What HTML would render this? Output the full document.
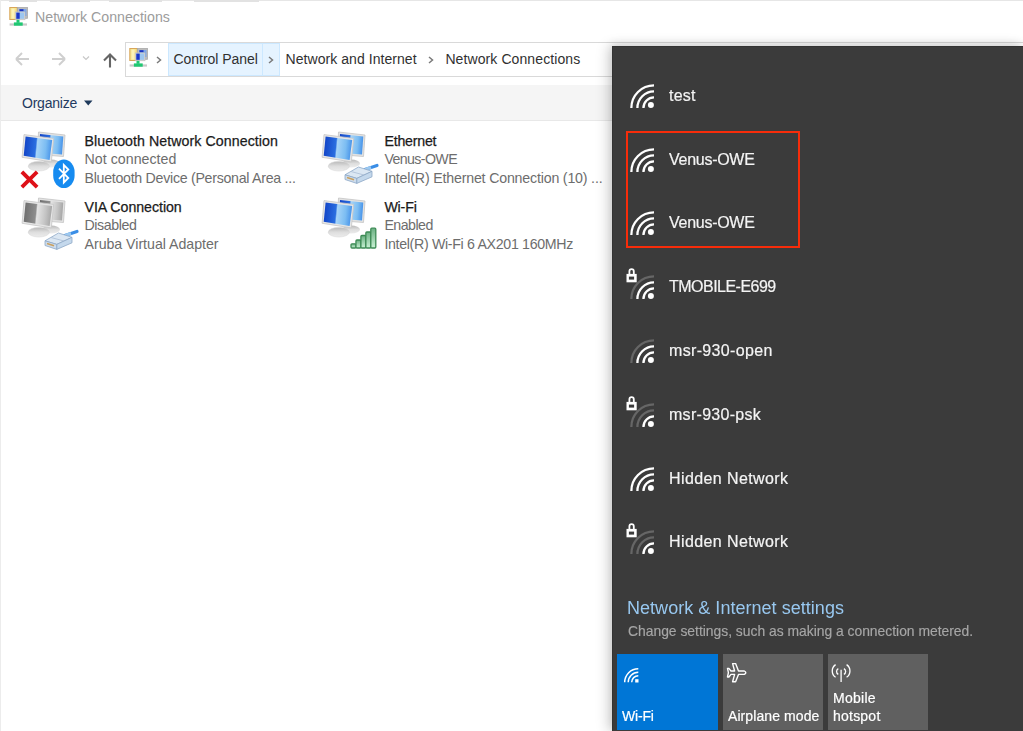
<!DOCTYPE html>
<html><head><meta charset="utf-8"><style>
html,body{margin:0;padding:0;}
body{width:1023px;height:731px;overflow:hidden;position:relative;background:#fff;font-family:"Liberation Sans",sans-serif;}
.t{position:absolute;white-space:nowrap;line-height:1;}
svg{overflow:visible}
</style></head><body>
<div style="position:absolute;left:0;top:0;width:1023px;height:1px;background:#e6e6e6"></div>
<div style="position:absolute;left:9px;top:0;width:28px;height:2px;background:#e2e2e2"></div>
<div style="position:absolute;left:50px;top:0;width:40px;height:2px;background:#e2e2e2"></div>
<div style="position:absolute;left:109px;top:0;width:53px;height:2px;background:#e2e2e2"></div>
<div style="position:absolute;left:194px;top:0;width:65px;height:2px;background:#e2e2e2"></div>
<div style="position:absolute;left:0;top:0;width:1px;height:731px;background:#ececec"></div>
<svg style="position:absolute;left:9px;top:7px" width="20" height="20" viewBox="0 0 20 20">
<rect x="0.8" y="0.5" width="7.4" height="12" fill="#f6e48c" stroke="#d8a55a" stroke-width="1"/>
<rect x="2.5" y="1.5" width="3" height="10" fill="#fbf2b8"/>
<rect x="8.5" y="0.5" width="10" height="10.8" fill="#bcbcbc" stroke="#a9a9a9" stroke-width="0.8"/>
<rect x="10" y="2" width="7.5" height="7" fill="#7ea6e6"/>
<rect x="10.5" y="2.2" width="4" height="2" fill="#1a32c0"/>
<rect x="6.2" y="4.9" width="9.8" height="7.9" fill="#d6d6d6" stroke="#bdbdbd" stroke-width="0.6"/>
<rect x="7.3" y="5.6" width="7.8" height="6.2" fill="#9cc6f0"/>
<rect x="7.3" y="5.6" width="3.4" height="6.2" fill="#1a36c8"/>
<rect x="0.6" y="16.4" width="17.4" height="2.2" fill="#c9c9c9"/>
<rect x="7.5" y="12.8" width="3" height="3" fill="#1fc872"/>
<rect x="4.9" y="15.4" width="8.8" height="3.3" fill="#1fc872"/>
</svg>
<div class="t" style="left:35.00px;top:10.28px;font-size:14.2px;color:#9c9c9c;letter-spacing:0.002px;">Network Connections</div>
<svg style="position:absolute;left:12px;top:48px" width="112" height="24" viewBox="0 0 112 24">
<g fill="none" stroke="#cfcfcf" stroke-width="1.9">
<path d="M4 11 H17 M4 11 L10 5 M4 11 L10 17"/>
<path d="M40 11 H53 M53 11 L47 5 M53 11 L47 17"/>
<path d="M71 8.5 L74 11.5 L77 8.5" stroke="#c8c8c8" stroke-width="1.2"/>
</g>
<g fill="none" stroke="#666666" stroke-width="2.1">
<path d="M98 19.5 V6.5 M92 12.5 L98 6.5 L104 12.5"/>
</g>
</svg>
<div style="position:absolute;left:125px;top:42px;width:960px;height:33px;border:1px solid #d9d9d9;background:#fff"></div>
<svg style="position:absolute;left:129px;top:48px" width="20" height="20" viewBox="0 0 20 20">
<rect x="0.8" y="0.5" width="7.4" height="12" fill="#f6e48c" stroke="#d8a55a" stroke-width="1"/>
<rect x="2.5" y="1.5" width="3" height="10" fill="#fbf2b8"/>
<rect x="8.5" y="0.5" width="10" height="10.8" fill="#bcbcbc" stroke="#a9a9a9" stroke-width="0.8"/>
<rect x="10" y="2" width="7.5" height="7" fill="#7ea6e6"/>
<rect x="10.5" y="2.2" width="4" height="2" fill="#1a32c0"/>
<rect x="6.2" y="4.9" width="9.8" height="7.9" fill="#d6d6d6" stroke="#bdbdbd" stroke-width="0.6"/>
<rect x="7.3" y="5.6" width="7.8" height="6.2" fill="#9cc6f0"/>
<rect x="7.3" y="5.6" width="3.4" height="6.2" fill="#1a36c8"/>
<rect x="0.6" y="16.4" width="17.4" height="2.2" fill="#c9c9c9"/>
<rect x="7.5" y="12.8" width="3" height="3" fill="#1fc872"/>
<rect x="4.9" y="15.4" width="8.8" height="3.3" fill="#1fc872"/>
</svg>
<div style="position:absolute;left:168px;top:43px;width:112px;height:33px;background:#e5f3ff;border:1px solid #cce8ff;box-sizing:border-box"></div>
<div style="position:absolute;left:262px;top:43px;width:1px;height:33px;background:#cce8ff"></div>
<svg style="position:absolute;left:155px;top:56px" width="8" height="8" viewBox="0 0 8 8"><path d="M2 1 L5.5 4 L2 7" fill="none" stroke="#7a7a7a" stroke-width="1.5"/></svg>
<div class="t" style="left:173.50px;top:52.05px;font-size:14px;color:#303030;letter-spacing:-0.041px;">Control Panel</div>
<svg style="position:absolute;left:267px;top:56px" width="8" height="8" viewBox="0 0 8 8"><path d="M2 1 L5.5 4 L2 7" fill="none" stroke="#7a7a7a" stroke-width="1.5"/></svg>
<div class="t" style="left:285.60px;top:52.05px;font-size:14px;color:#303030;letter-spacing:0.052px;">Network and Internet</div>
<svg style="position:absolute;left:427px;top:56px" width="8" height="8" viewBox="0 0 8 8"><path d="M2 1 L5.5 4 L2 7" fill="none" stroke="#7a7a7a" stroke-width="1.5"/></svg>
<div class="t" style="left:445.40px;top:52.05px;font-size:14px;color:#303030;letter-spacing:0.097px;">Network Connections</div>
<div style="position:absolute;left:1px;top:85px;width:1022px;height:35px;background:#f5f5f5;border-bottom:1px solid #e8e8e8"></div>
<div class="t" style="left:22.00px;top:95.95px;font-size:14px;color:#1f3a60;letter-spacing:-0.226px;">Organize</div>
<svg style="position:absolute;left:83px;top:99px" width="11" height="8" viewBox="0 0 11 8"><path d="M1 1.5 H9.5 L5.25 6.5Z" fill="#1e395b"/></svg>
<svg style="position:absolute;left:14px;top:126px" width="66" height="66" viewBox="0 0 66 66">
<defs><linearGradient id="m14_126" x1="0" y1="0" x2="1" y2="0.08"><stop offset="0" stop-color="#0f3fc4"/><stop offset="0.45" stop-color="#2a6ee0"/><stop offset="0.5" stop-color="#a6d4f8"/><stop offset="0.8" stop-color="#7cbdf2"/><stop offset="1" stop-color="#4b96ea"/></linearGradient>
<linearGradient id="sm14_126" x1="0" y1="0" x2="0" y2="1"><stop offset="0" stop-color="#b9b9b9"/><stop offset="0.5" stop-color="#dedede"/><stop offset="1" stop-color="#ececec"/></linearGradient></defs>
<polygon points="24.5,6 51,9 49.5,30.5 23.5,28.5" fill="#e2e2e2" stroke="#c4c4c4" stroke-width="0.8"/>
<polygon points="26,8 49.3,10.5 48,28.5 25,26.8" fill="url(#m14_126)"/>
<ellipse cx="37" cy="37.5" rx="9" ry="4" fill="url(#sm14_126)"/>
<polygon points="10,8.6 39.7,12.4 37.3,35.9 8.1,31.3" fill="#e6e6e6" stroke="#c6c6c6" stroke-width="0.8"/>
<polygon points="11.6,10.4 38.2,13.9 35.6,33.9 9.7,29.8" fill="url(#m14_126)"/>
<ellipse cx="24.8" cy="40.2" rx="10.6" ry="4.8" fill="url(#sm14_126)" stroke="#d2d2d2" stroke-width="0.5"/>
</svg>
<svg style="position:absolute;left:21px;top:171px" width="18" height="18" viewBox="0 0 18 18">
<path d="M2.2 2.2 L14.8 14.8 M14.8 2.2 L2.2 14.8" stroke="#de1018" stroke-width="3.8" stroke-linecap="square"/></svg>
<svg style="position:absolute;left:52px;top:159px" width="23" height="30" viewBox="0 0 23 30">
<rect x="1.2" y="0.5" width="21.4" height="28.6" rx="10.7" ry="12.5" fill="#168bf0"/>
<path d="M7 9.7 L16.3 19 L11.8 23.5 V6 L16.3 10.5 L7 19.8" fill="none" stroke="#fff" stroke-width="1.8"/></svg>
<div class="t" style="left:84.50px;top:133.98px;font-size:14.2px;color:#1b1b1b;letter-spacing:0.064px;-webkit-text-stroke:0.25px currentColor;">Bluetooth Network Connection</div>
<div class="t" style="left:84.50px;top:152.28px;font-size:14.2px;color:#6d6d6d;letter-spacing:0.033px;">Not connected</div>
<div class="t" style="left:84.50px;top:170.88px;font-size:14.2px;color:#6d6d6d;letter-spacing:-0.278px;">Bluetooth Device (Personal Area ...</div>
<svg style="position:absolute;left:314px;top:126px" width="66" height="66" viewBox="0 0 66 66">
<defs><linearGradient id="m314_126" x1="0" y1="0" x2="1" y2="0.08"><stop offset="0" stop-color="#0f3fc4"/><stop offset="0.45" stop-color="#2a6ee0"/><stop offset="0.5" stop-color="#a6d4f8"/><stop offset="0.8" stop-color="#7cbdf2"/><stop offset="1" stop-color="#4b96ea"/></linearGradient>
<linearGradient id="sm314_126" x1="0" y1="0" x2="0" y2="1"><stop offset="0" stop-color="#b9b9b9"/><stop offset="0.5" stop-color="#dedede"/><stop offset="1" stop-color="#ececec"/></linearGradient></defs>
<polygon points="24.5,6 51,9 49.5,30.5 23.5,28.5" fill="#e2e2e2" stroke="#c4c4c4" stroke-width="0.8"/>
<polygon points="26,8 49.3,10.5 48,28.5 25,26.8" fill="url(#m314_126)"/>
<ellipse cx="37" cy="37.5" rx="9" ry="4" fill="url(#sm314_126)"/>
<polygon points="10,8.6 39.7,12.4 37.3,35.9 8.1,31.3" fill="#e6e6e6" stroke="#c6c6c6" stroke-width="0.8"/>
<polygon points="11.6,10.4 38.2,13.9 35.6,33.9 9.7,29.8" fill="url(#m314_126)"/>
<ellipse cx="24.8" cy="40.2" rx="10.6" ry="4.8" fill="url(#sm314_126)" stroke="#d2d2d2" stroke-width="0.5"/>
</svg>
<svg style="position:absolute;left:344px;top:163px" width="34" height="24" viewBox="0 0 34 24">
<path d="M21 6.5 L33 2.5" stroke="#3a8ee6" stroke-width="3.2" stroke-linecap="round"/>
<path d="M21 6.5 L27 4.5" stroke="#9cc8f0" stroke-width="3"/>
<polygon points="1,11.8 14.5,4 28,8.3 12.8,15.4" fill="#dbe7f3" stroke="#8ea8c6" stroke-width="0.8"/>
<polygon points="1,11.8 12.8,15.4 12.8,20.4 1,16.5" fill="#cddcec" stroke="#8ea8c6" stroke-width="0.8"/>
<polygon points="12.8,15.4 28,8.3 28,13.8 12.8,20.4" fill="#c4d8ec" stroke="#8ea8c6" stroke-width="0.8"/>
<path d="M3 14.5 L10 16.8" stroke="#c9a060" stroke-width="1.6"/>
<path d="M7 8.5 L20 12" stroke="#a9bdd4" stroke-width="0.8"/>
</svg>
<div class="t" style="left:384.40px;top:133.98px;font-size:14.2px;color:#1b1b1b;letter-spacing:-0.210px;-webkit-text-stroke:0.25px currentColor;">Ethernet</div>
<div class="t" style="left:384.40px;top:152.28px;font-size:14.2px;color:#6d6d6d;letter-spacing:-0.603px;">Venus-OWE</div>
<div class="t" style="left:384.40px;top:170.88px;font-size:14.2px;color:#6d6d6d;letter-spacing:-0.182px;">Intel(R) Ethernet Connection (10) ...</div>
<svg style="position:absolute;left:14px;top:192px" width="66" height="66" viewBox="0 0 66 66">
<defs><linearGradient id="m14_192" x1="0" y1="0" x2="1" y2="0.08"><stop offset="0" stop-color="#6a6a6a"/><stop offset="0.45" stop-color="#8e8e8e"/><stop offset="0.5" stop-color="#e4e4e4"/><stop offset="0.8" stop-color="#c4c4c4"/><stop offset="1" stop-color="#a8a8a8"/></linearGradient>
<linearGradient id="sm14_192" x1="0" y1="0" x2="0" y2="1"><stop offset="0" stop-color="#b9b9b9"/><stop offset="0.5" stop-color="#dedede"/><stop offset="1" stop-color="#ececec"/></linearGradient></defs>
<polygon points="24.5,6 51,9 49.5,30.5 23.5,28.5" fill="#e2e2e2" stroke="#c4c4c4" stroke-width="0.8"/>
<polygon points="26,8 49.3,10.5 48,28.5 25,26.8" fill="url(#m14_192)"/>
<ellipse cx="37" cy="37.5" rx="9" ry="4" fill="url(#sm14_192)"/>
<polygon points="10,8.6 39.7,12.4 37.3,35.9 8.1,31.3" fill="#e6e6e6" stroke="#c6c6c6" stroke-width="0.8"/>
<polygon points="11.6,10.4 38.2,13.9 35.6,33.9 9.7,29.8" fill="url(#m14_192)"/>
<ellipse cx="24.8" cy="40.2" rx="10.6" ry="4.8" fill="url(#sm14_192)" stroke="#d2d2d2" stroke-width="0.5"/>
</svg>
<svg style="position:absolute;left:44px;top:229px" width="34" height="24" viewBox="0 0 34 24">
<path d="M21 6.5 L33 2.5" stroke="#3a8ee6" stroke-width="3.2" stroke-linecap="round"/>
<path d="M21 6.5 L27 4.5" stroke="#9cc8f0" stroke-width="3"/>
<polygon points="1,11.8 14.5,4 28,8.3 12.8,15.4" fill="#dbe7f3" stroke="#8ea8c6" stroke-width="0.8"/>
<polygon points="1,11.8 12.8,15.4 12.8,20.4 1,16.5" fill="#cddcec" stroke="#8ea8c6" stroke-width="0.8"/>
<polygon points="12.8,15.4 28,8.3 28,13.8 12.8,20.4" fill="#c4d8ec" stroke="#8ea8c6" stroke-width="0.8"/>
<path d="M3 14.5 L10 16.8" stroke="#c9a060" stroke-width="1.6"/>
<path d="M7 8.5 L20 12" stroke="#a9bdd4" stroke-width="0.8"/>
</svg>
<div class="t" style="left:84.50px;top:199.98px;font-size:14.2px;color:#1b1b1b;letter-spacing:-0.042px;-webkit-text-stroke:0.25px currentColor;">VIA Connection</div>
<div class="t" style="left:84.50px;top:218.18px;font-size:14.2px;color:#6d6d6d;letter-spacing:-0.419px;">Disabled</div>
<div class="t" style="left:84.50px;top:236.58px;font-size:14.2px;color:#6d6d6d;letter-spacing:-0.030px;">Aruba Virtual Adapter</div>
<svg style="position:absolute;left:314px;top:192px" width="66" height="66" viewBox="0 0 66 66">
<defs><linearGradient id="m314_192" x1="0" y1="0" x2="1" y2="0.08"><stop offset="0" stop-color="#0f3fc4"/><stop offset="0.45" stop-color="#2a6ee0"/><stop offset="0.5" stop-color="#a6d4f8"/><stop offset="0.8" stop-color="#7cbdf2"/><stop offset="1" stop-color="#4b96ea"/></linearGradient>
<linearGradient id="sm314_192" x1="0" y1="0" x2="0" y2="1"><stop offset="0" stop-color="#b9b9b9"/><stop offset="0.5" stop-color="#dedede"/><stop offset="1" stop-color="#ececec"/></linearGradient></defs>
<polygon points="24.5,6 51,9 49.5,30.5 23.5,28.5" fill="#e2e2e2" stroke="#c4c4c4" stroke-width="0.8"/>
<polygon points="26,8 49.3,10.5 48,28.5 25,26.8" fill="url(#m314_192)"/>
<ellipse cx="37" cy="37.5" rx="9" ry="4" fill="url(#sm314_192)"/>
<polygon points="10,8.6 39.7,12.4 37.3,35.9 8.1,31.3" fill="#e6e6e6" stroke="#c6c6c6" stroke-width="0.8"/>
<polygon points="11.6,10.4 38.2,13.9 35.6,33.9 9.7,29.8" fill="url(#m314_192)"/>
<ellipse cx="24.8" cy="40.2" rx="10.6" ry="4.8" fill="url(#sm314_192)" stroke="#d2d2d2" stroke-width="0.5"/>
</svg>
<svg style="position:absolute;left:350px;top:227px" width="28" height="24" viewBox="0 0 28 24"><defs><linearGradient id="bg" x1="0" y1="0" x2="0" y2="1"><stop offset="0" stop-color="#6cb083"/><stop offset="1" stop-color="#c9f2d5"/></linearGradient></defs><rect x="1.0" y="16.8" width="5" height="4.199999999999999" fill="url(#bg)" stroke="#3d8b55" stroke-width="1.3" rx="1"/><rect x="5.95" y="13" width="5" height="8" fill="url(#bg)" stroke="#3d8b55" stroke-width="1.3" rx="1"/><rect x="10.9" y="8.5" width="5" height="12.5" fill="url(#bg)" stroke="#3d8b55" stroke-width="1.3" rx="1"/><rect x="15.850000000000001" y="5" width="5" height="16" fill="url(#bg)" stroke="#3d8b55" stroke-width="1.3" rx="1"/><rect x="20.8" y="1.2" width="5" height="19.8" fill="url(#bg)" stroke="#3d8b55" stroke-width="1.3" rx="1"/></svg>
<div class="t" style="left:384.40px;top:199.98px;font-size:14.2px;color:#1b1b1b;letter-spacing:-0.163px;-webkit-text-stroke:0.25px currentColor;">Wi-Fi</div>
<div class="t" style="left:384.40px;top:218.18px;font-size:14.2px;color:#6d6d6d;letter-spacing:-0.531px;">Enabled</div>
<div class="t" style="left:384.40px;top:236.58px;font-size:14.2px;color:#6d6d6d;letter-spacing:-0.320px;">Intel(R) Wi-Fi 6 AX201 160MHz</div>
<div style="position:absolute;left:612px;top:46px;width:411px;height:685px;background:#3b3b3b;box-shadow:-4px 0 12px rgba(0,0,0,0.18), 0 -3px 8px rgba(0,0,0,0.08);border-left:1px solid #333;border-top:1px solid #333;box-sizing:border-box"></div>
<svg style="position:absolute;left:623.90px;top:75.80px" width="34" height="36" viewBox="0 0 34 36"><path d="M7.350000000000001 32 A22.65 22.65 0 0 1 30 9.350000000000001" fill="none" stroke="#ffffff" stroke-width="2.3"/><path d="M13.399999999999999 32 A16.6 16.6 0 0 1 30 15.399999999999999" fill="none" stroke="#ffffff" stroke-width="2.3"/><path d="M19.45 32 A10.55 10.55 0 0 1 30 21.45" fill="none" stroke="#ffffff" stroke-width="2.3"/><circle cx="26.9" cy="29" r="3" fill="#fff"/></svg>
<div class="t" style="left:669.00px;top:87.86px;font-size:16px;color:#f4f4f4;letter-spacing:0.203px;-webkit-text-stroke:0.2px currentColor;will-change:transform;">test</div>
<svg style="position:absolute;left:623.90px;top:139.60px" width="34" height="36" viewBox="0 0 34 36"><path d="M7.350000000000001 32 A22.65 22.65 0 0 1 30 9.350000000000001" fill="none" stroke="#ffffff" stroke-width="2.3"/><path d="M13.399999999999999 32 A16.6 16.6 0 0 1 30 15.399999999999999" fill="none" stroke="#ffffff" stroke-width="2.3"/><path d="M19.45 32 A10.55 10.55 0 0 1 30 21.45" fill="none" stroke="#ffffff" stroke-width="2.3"/><circle cx="26.9" cy="29" r="3" fill="#fff"/></svg>
<div class="t" style="left:669.00px;top:151.66px;font-size:16px;color:#f4f4f4;letter-spacing:-0.270px;-webkit-text-stroke:0.2px currentColor;will-change:transform;">Venus-OWE</div>
<svg style="position:absolute;left:623.90px;top:203.40px" width="34" height="36" viewBox="0 0 34 36"><path d="M7.350000000000001 32 A22.65 22.65 0 0 1 30 9.350000000000001" fill="none" stroke="#ffffff" stroke-width="2.3"/><path d="M13.399999999999999 32 A16.6 16.6 0 0 1 30 15.399999999999999" fill="none" stroke="#ffffff" stroke-width="2.3"/><path d="M19.45 32 A10.55 10.55 0 0 1 30 21.45" fill="none" stroke="#ffffff" stroke-width="2.3"/><circle cx="26.9" cy="29" r="3" fill="#fff"/></svg>
<div class="t" style="left:669.00px;top:215.46px;font-size:16px;color:#f4f4f4;letter-spacing:-0.270px;-webkit-text-stroke:0.2px currentColor;will-change:transform;">Venus-OWE</div>
<svg style="position:absolute;left:623.90px;top:267.20px" width="34" height="36" viewBox="0 0 34 36"><path d="M7.350000000000001 32 A22.65 22.65 0 0 1 30 9.350000000000001" fill="none" stroke="#666666" stroke-width="2.3"/><path d="M13.399999999999999 32 A16.6 16.6 0 0 1 30 15.399999999999999" fill="none" stroke="#ffffff" stroke-width="2.3"/><path d="M19.45 32 A10.55 10.55 0 0 1 30 21.45" fill="none" stroke="#ffffff" stroke-width="2.3"/><circle cx="26.9" cy="29" r="3" fill="#fff"/><path d="M5.4 7.399999999999999 V4.399999999999999 A2.2 2.2 0 0 1 9.8 4.399999999999999 V7.399999999999999" fill="none" stroke="#fff" stroke-width="1.8"/><rect x="2.5" y="6.899999999999999" width="10.2" height="8.4" fill="#fff"/><rect x="4.9" y="9.599999999999998" width="5.2" height="3" fill="#3b3b3b"/></svg>
<div class="t" style="left:669.00px;top:279.26px;font-size:16px;color:#f4f4f4;letter-spacing:-0.519px;-webkit-text-stroke:0.2px currentColor;will-change:transform;">TMOBILE-E699</div>
<svg style="position:absolute;left:623.90px;top:331.00px" width="34" height="36" viewBox="0 0 34 36"><path d="M7.350000000000001 32 A22.65 22.65 0 0 1 30 9.350000000000001" fill="none" stroke="#666666" stroke-width="2.3"/><path d="M13.399999999999999 32 A16.6 16.6 0 0 1 30 15.399999999999999" fill="none" stroke="#ffffff" stroke-width="2.3"/><path d="M19.45 32 A10.55 10.55 0 0 1 30 21.45" fill="none" stroke="#ffffff" stroke-width="2.3"/><circle cx="26.9" cy="29" r="3" fill="#fff"/></svg>
<div class="t" style="left:669.00px;top:343.06px;font-size:16px;color:#f4f4f4;letter-spacing:0.341px;-webkit-text-stroke:0.2px currentColor;will-change:transform;">msr-930-open</div>
<svg style="position:absolute;left:623.90px;top:394.80px" width="34" height="36" viewBox="0 0 34 36"><path d="M7.350000000000001 32 A22.65 22.65 0 0 1 30 9.350000000000001" fill="none" stroke="#666666" stroke-width="2.3"/><path d="M13.399999999999999 32 A16.6 16.6 0 0 1 30 15.399999999999999" fill="none" stroke="#666666" stroke-width="2.3"/><path d="M19.45 32 A10.55 10.55 0 0 1 30 21.45" fill="none" stroke="#ffffff" stroke-width="2.3"/><circle cx="26.9" cy="29" r="3" fill="#fff"/><path d="M5.4 7.399999999999999 V4.399999999999999 A2.2 2.2 0 0 1 9.8 4.399999999999999 V7.399999999999999" fill="none" stroke="#fff" stroke-width="1.8"/><rect x="2.5" y="6.899999999999999" width="10.2" height="8.4" fill="#fff"/><rect x="4.9" y="9.599999999999998" width="5.2" height="3" fill="#3b3b3b"/></svg>
<div class="t" style="left:669.00px;top:406.86px;font-size:16px;color:#f4f4f4;letter-spacing:0.290px;-webkit-text-stroke:0.2px currentColor;will-change:transform;">msr-930-psk</div>
<svg style="position:absolute;left:623.90px;top:458.60px" width="34" height="36" viewBox="0 0 34 36"><path d="M7.350000000000001 32 A22.65 22.65 0 0 1 30 9.350000000000001" fill="none" stroke="#ffffff" stroke-width="2.3"/><path d="M13.399999999999999 32 A16.6 16.6 0 0 1 30 15.399999999999999" fill="none" stroke="#ffffff" stroke-width="2.3"/><path d="M19.45 32 A10.55 10.55 0 0 1 30 21.45" fill="none" stroke="#ffffff" stroke-width="2.3"/><circle cx="26.9" cy="29" r="3" fill="#fff"/></svg>
<div class="t" style="left:669.00px;top:470.66px;font-size:16px;color:#f4f4f4;letter-spacing:0.398px;-webkit-text-stroke:0.2px currentColor;will-change:transform;">Hidden Network</div>
<svg style="position:absolute;left:623.90px;top:522.40px" width="34" height="36" viewBox="0 0 34 36"><path d="M7.350000000000001 32 A22.65 22.65 0 0 1 30 9.350000000000001" fill="none" stroke="#666666" stroke-width="2.3"/><path d="M13.399999999999999 32 A16.6 16.6 0 0 1 30 15.399999999999999" fill="none" stroke="#666666" stroke-width="2.3"/><path d="M19.45 32 A10.55 10.55 0 0 1 30 21.45" fill="none" stroke="#ffffff" stroke-width="2.3"/><circle cx="26.9" cy="29" r="3" fill="#fff"/><path d="M5.4 7.399999999999999 V4.399999999999999 A2.2 2.2 0 0 1 9.8 4.399999999999999 V7.399999999999999" fill="none" stroke="#fff" stroke-width="1.8"/><rect x="2.5" y="6.899999999999999" width="10.2" height="8.4" fill="#fff"/><rect x="4.9" y="9.599999999999998" width="5.2" height="3" fill="#3b3b3b"/></svg>
<div class="t" style="left:669.00px;top:534.46px;font-size:16px;color:#f4f4f4;letter-spacing:0.398px;-webkit-text-stroke:0.2px currentColor;will-change:transform;">Hidden Network</div>
<div style="position:absolute;left:626px;top:131px;width:174px;height:117px;border:2px solid #f72c0a;box-sizing:border-box"></div>
<div class="t" style="left:627.20px;top:598.56px;font-size:18px;color:#98c8f0;letter-spacing:0.033px;will-change:transform;">Network &amp; Internet settings</div>
<div class="t" style="left:627.70px;top:624.73px;font-size:13.9px;color:#a6a6a6;letter-spacing:-0.016px;-webkit-text-stroke:0.15px currentColor;will-change:transform;">Change settings, such as making a connection metered.</div>
<div style="position:absolute;left:617px;top:654px;width:101px;height:76px;background:#0076d6"></div>
<div style="position:absolute;left:722.5px;top:654px;width:100.5px;height:76px;background:#606060"></div>
<div style="position:absolute;left:828px;top:654px;width:100px;height:76px;background:#606060"></div>
<svg style="position:absolute;left:622px;top:666px" width="18" height="18" viewBox="0 0 18 18">
<g fill="none" stroke="#fff" stroke-width="1.5">
<path d="M2.7 16.3 A13.6 13.6 0 0 1 16.3 2.7"/><path d="M6.2 16.3 A10.1 10.1 0 0 1 16.3 6.2"/><path d="M9.7 16.3 A6.6 6.6 0 0 1 16.3 9.7"/></g>
<rect x="13.2" y="13.2" width="3.3" height="3.3" fill="#fff"/></svg>
<svg style="position:absolute;left:726px;top:662px" width="22" height="22" viewBox="0 0 22 22">
<path d="M18.3 9 Q21.3 10.7 18.3 12.4 L12.5 12.4 L9.6 19.8 L6.6 19.8 L8.6 12.4 L5 12.4 L2.9 15 L1.5 15 L2.4 10.7 L1.5 6.4 L2.9 6.4 L5 9 L8.6 9 L6.6 1.6 L9.6 1.6 L12.5 9 Z" fill="none" stroke="#fff" stroke-width="1.4" stroke-linejoin="round"/></svg>
<svg style="position:absolute;left:831px;top:663px" width="22" height="22" viewBox="0 0 22 22">
<g fill="none" stroke="#fff" stroke-width="1.3">
<path d="M10.1 6.8 V19"/>
<path d="M4.6 1.6 A7.6 7.6 0 0 0 4.6 14.2"/><path d="M15.6 1.6 A7.6 7.6 0 0 1 15.6 14.2"/>
<path d="M7.3 5.6 A3.2 3.2 0 0 0 7.3 11.3"/><path d="M12.9 5.6 A3.2 3.2 0 0 1 12.9 11.3"/>
</g></svg>
<div class="t" style="left:622.20px;top:708.75px;font-size:14px;color:#ffffff;letter-spacing:-0.170px;-webkit-text-stroke:0.2px currentColor;will-change:transform;">Wi-Fi</div>
<div class="t" style="left:727.60px;top:708.75px;font-size:14px;color:#ffffff;letter-spacing:0.086px;-webkit-text-stroke:0.2px currentColor;will-change:transform;">Airplane mode</div>
<div class="t" style="left:833.10px;top:690.65px;font-size:14px;color:#ffffff;letter-spacing:0.276px;-webkit-text-stroke:0.2px currentColor;will-change:transform;">Mobile</div>
<div class="t" style="left:833.10px;top:708.75px;font-size:14px;color:#ffffff;letter-spacing:0.225px;-webkit-text-stroke:0.2px currentColor;will-change:transform;">hotspot</div>
</body></html>
